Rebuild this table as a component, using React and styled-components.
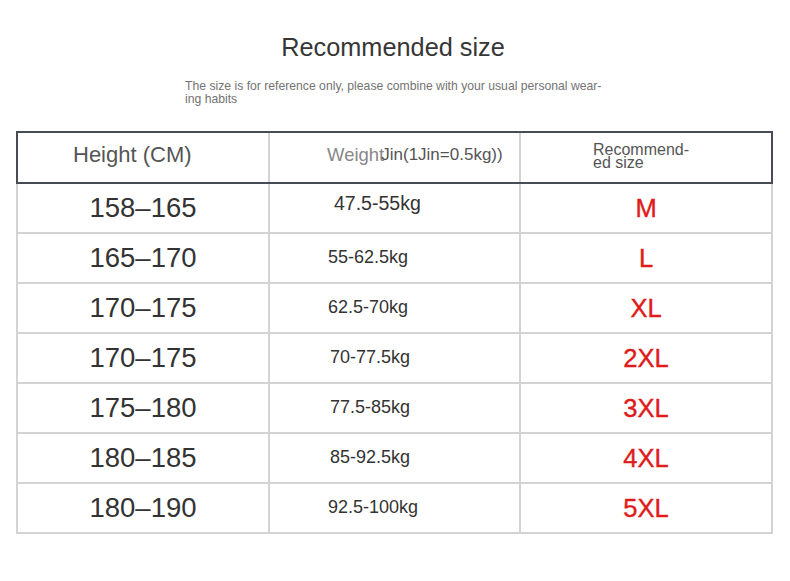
import React from 'react';
import styled, { createGlobalStyle } from 'styled-components';

const GlobalStyle = createGlobalStyle`
  html, body {
    margin: 0;
    padding: 0;
    background: #ffffff;
  }
  body {
    font-family: "Liberation Sans", Arial, sans-serif;
  }
`;

const Page = styled.div`
  width: 790px;
  height: 581px;
  background: #fff;
  display: flex;
  flex-direction: column;
  box-sizing: border-box;
  padding-top: 32px;
`;

const Title = styled.h1`
  margin: 0;
  padding-right: 4px;
  font-size: 25.3px;
  line-height: 30px;
  font-weight: 400;
  color: #363636;
  text-align: center;
`;

const Note = styled.p`
  margin: 18px 0 0 185px;
  font-size: 12.2px;
  line-height: 13px;
  color: #737373;
`;

const Table = styled.div`
  margin: 25px 0 0 16px;
  width: 757px;
  display: flex;
  flex-direction: column;
`;

const Row = styled.div`
  display: grid;
  grid-template-columns: 252px 251px 250px;
  height: ${(p) => (p.$head ? '53px' : '50px')};
  box-sizing: border-box;
  border: 2px solid ${(p) => (p.$head ? '#474c54' : '#d3d3d3')};
  border-top: ${(p) => (p.$head ? '2px solid #474c54' : 'none')};
`;

const Cell = styled.div`
  box-sizing: border-box;
  display: flex;
  align-items: center;
  justify-content: ${(p) => (p.$center ? 'center' : 'flex-start')};
  padding-left: ${(p) => p.$pad || 0}px;
  padding-bottom: ${(p) => p.$lift || 0}px;
  border-right: ${(p) => (p.$last ? 'none' : '2px solid #d3d3d3')};
`;

const HeadLabel = styled.span`
  font-size: ${(p) => p.$size}px;
  color: ${(p) => p.$color || '#555'};
  white-space: nowrap;
`;

const Stack = styled.div`
  display: flex;
  flex-direction: column;
  font-size: 16px;
  line-height: 13px;
  color: #555;
`;

const Unit = styled.span`
  font-size: 17px;
  color: #555;
  margin-left: -3px;
`;

const Height = styled.span`
  font-size: 27.5px;
  color: #333;
`;

const Weight = styled.span`
  font-size: ${(p) => p.$size}px;
  color: #333;
`;

const Size = styled.span`
  font-size: 25.5px;
  color: #df1b1b;
  -webkit-text-stroke: 0.4px #df1b1b;
`;

const rows = [
  { h: '158–165', w: '47.5-55kg', s: 'M', pad: 64, fs: 19.5, lift: 10 },
  { h: '165–170', w: '55-62.5kg', s: 'L', pad: 58, fs: 18, lift: 2 },
  { h: '170–175', w: '62.5-70kg', s: 'XL', pad: 58, fs: 18, lift: 2 },
  { h: '170–175', w: '70-77.5kg', s: '2XL', pad: 60, fs: 18, lift: 2 },
  { h: '175–180', w: '77.5-85kg', s: '3XL', pad: 60, fs: 18, lift: 2 },
  { h: '180–185', w: '85-92.5kg', s: '4XL', pad: 60, fs: 18, lift: 2 },
  { h: '180–190', w: '92.5-100kg', s: '5XL', pad: 58, fs: 18, lift: 2 }
];

const App = () => (
  <>
    <GlobalStyle />
    <Page>
      <Title>Recommended size</Title>
      <Note>
        The size is for reference only, please combine with your usual personal wear-
        <br />
        ing habits
      </Note>
      <Table>
        <Row $head>
          <Cell $pad={55} $lift={6}>
            <HeadLabel $size={22}>Height (CM)</HeadLabel>
          </Cell>
          <Cell $pad={57} $lift={6}>
            <HeadLabel $size={18.5} $color="#888">
              Weight
            </HeadLabel>
            <Unit>Jin(1Jin=0.5kg))</Unit>
          </Cell>
          <Cell $pad={72} $lift={4} $last>
            <Stack>
              <span>Recommend-</span>
              <span>ed size</span>
            </Stack>
          </Cell>
        </Row>
        {rows.map((r, i) => (
          <Row key={i}>
            <Cell $center>
              <Height>{r.h}</Height>
            </Cell>
            <Cell $pad={r.pad} $lift={r.lift}>
              <Weight $size={r.fs}>{r.w}</Weight>
            </Cell>
            <Cell $center $last>
              <Size>{r.s}</Size>
            </Cell>
          </Row>
        ))}
      </Table>
    </Page>
  </>
);

export default App;
